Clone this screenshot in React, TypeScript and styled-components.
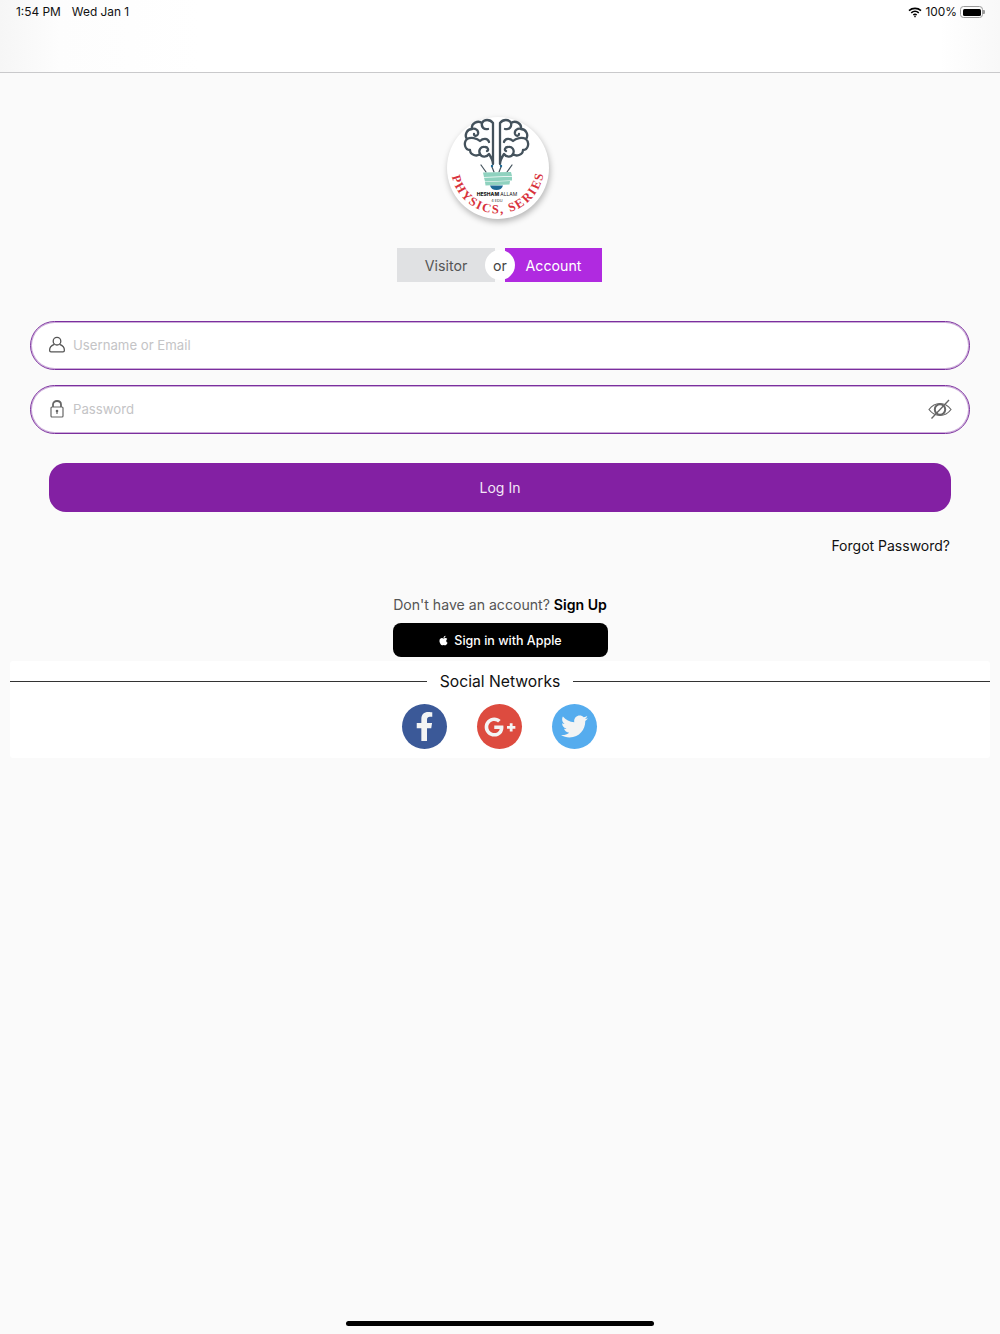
import React from 'react';
import styled, { createGlobalStyle } from 'styled-components';
import { FaApple, FaFacebookF, FaGooglePlusG, FaTwitter } from 'react-icons/fa';

const GlobalStyle = createGlobalStyle`
  html, body {
    margin: 0;
    padding: 0;
    background: #fafafa;
  }
  * {
    box-sizing: border-box;
  }
`;

const Page = styled.div`
  display: flex;
  flex-direction: column;
  height: 1334px;
  overflow: hidden;
  background: #fafafa;
  font-family: Inter, "Liberation Sans", sans-serif;
`;

const Header = styled.header`
  display: flex;
  justify-content: space-between;
  align-items: flex-start;
  flex: none;
  height: 73px;
  padding: 4px 15px 0 16px;
  background: linear-gradient(90deg, #f6f6f6 0, #fdfdfd 60px, #ffffff 200px, #ffffff 940px, #f8f8f8 1000px);
  border-bottom: 1px solid #c9c9cb;
  font-size: 11.9px;
  line-height: 16px;
  color: #111;
`;

const StatusGroup = styled.div<{ $gap: number }>`
  display: flex;
  align-items: center;
  gap: ${(p) => p.$gap}px;
`;

const Battery = styled.div`
  position: relative;
  width: 23px;
  height: 12px;
  margin-right: 2px;
  padding: 1.5px;
  border: 1px solid #9a9a9a;
  border-radius: 3.5px;

  &::before {
    content: '';
    display: block;
    height: 100%;
    background: #000;
    border-radius: 1.5px;
  }

  &::after {
    content: '';
    position: absolute;
    right: -3px;
    top: 3px;
    width: 2px;
    height: 4px;
    background: #9a9a9a;
    border-radius: 0 1px 1px 0;
  }
`;

const Content = styled.main`
  display: flex;
  flex-direction: column;
  align-items: center;
  flex: 1;
`;

const LogoWrap = styled.div`
  width: 102px;
  height: 102px;
  margin: 44px 4px 0 0;
  border-radius: 50%;
  background: #fff;
  box-shadow: 1px 3px 6px rgba(0, 0, 0, 0.28);
`;

const Toggle = styled.div`
  position: relative;
  display: flex;
  justify-content: space-between;
  width: 205px;
  height: 34px;
  margin: 29px 1px 0 0;
`;

const Segment = styled.div<{ $active?: boolean }>`
  display: flex;
  align-items: center;
  justify-content: center;
  width: ${(p) => (p.$active ? 97 : 98)}px;
  background: ${(p) => (p.$active ? '#b02ae0' : '#e0e1e3')};
  color: ${(p) => (p.$active ? '#fff' : '#555')};
  font-size: 14.2px;
`;

const OrBadge = styled.div`
  position: absolute;
  left: 88px;
  top: 2px;
  width: 30px;
  height: 30px;
  display: flex;
  align-items: center;
  justify-content: center;
  border-radius: 50%;
  background: #fff;
  color: #444;
  font-size: 14.2px;
`;

const Field = styled.div<{ $first?: boolean }>`
  display: flex;
  align-items: center;
  width: 940px;
  height: 49px;
  margin-top: ${(p) => (p.$first ? 39 : 15)}px;
  padding: 0 17px 1px;
  background: #fff;
  border: 1px solid #7b2f9e;
  border-radius: 25px;
  box-shadow: inset 0 0 0 1px rgba(128, 50, 159, 0.4);
`;

const FieldIcon = styled.span`
  display: flex;
  justify-content: center;
  width: 18px;
  margin-right: 7px;
`;

const Placeholder = styled.span`
  flex: 1;
  color: #c4c4c6;
  font-size: 13.2px;
`;

const LoginButton = styled.div`
  display: flex;
  align-items: center;
  justify-content: center;
  width: 902px;
  height: 49px;
  margin-top: 29px;
  background: #8320a3;
  border-radius: 17px;
  color: #f3e6f7;
  font-size: 14px;
`;

const ForgotRow = styled.div`
  align-self: stretch;
  margin-top: 25px;
  padding-right: 50px;
  text-align: right;
  color: #111;
  font-size: 14px;
  line-height: 18px;
`;

const SignUpRow = styled.div`
  margin-top: 41px;
  color: #555;
  font-size: 14.1px;
  line-height: 18px;

  b {
    color: #000;
    font-weight: 600;
  }
`;

const AppleButton = styled.div`
  display: flex;
  align-items: center;
  justify-content: center;
  gap: 5px;
  width: 215px;
  height: 34px;
  margin-top: 9px;
  background: #000;
  border-radius: 8px;
  color: #fff;
  font-size: 12.5px;
  font-weight: 500;
`;

const SocialCard = styled.section`
  width: 980px;
  height: 97px;
  margin-top: 4px;
  background: #fff;
  border-radius: 3px;
`;

const DividerTitle = styled.div`
  display: flex;
  align-items: center;
  gap: 13px;
  height: 40px;
  color: #111;
  font-size: 15.7px;

  &::before,
  &::after {
    content: '';
    flex: 1;
    height: 1px;
    background: #333;
  }
`;

const SocialRow = styled.div`
  display: flex;
  justify-content: center;
  gap: 30px;
  margin-top: 3px;
  padding-right: 1px;
`;

const SocialIcon = styled.div<{ $color: string }>`
  display: flex;
  align-items: center;
  justify-content: center;
  width: 45px;
  height: 45px;
  border-radius: 50%;
  background: ${(p) => p.$color};
  color: #f3f4f4;
  overflow: hidden;
`;

const HomeIndicator = styled.div`
  flex: none;
  width: 308px;
  height: 5px;
  margin: 0 auto 8px;
  background: #000;
  border-radius: 3px;
`;

function Wifi() {
  return (
    <svg width="14" height="11" viewBox="0 0 14 11" fill="none" stroke="#000" strokeWidth="1.6">
      <path d="M1 3.6C4.4 .6 9.600 .6 13 3.6" />
      <path d="M3.2 5.900C5.400 4 8.600 4 10.800 5.900" />
      <path d="M5.300 8C6.300 7.200 7.700 7.200 8.700 8" />
      <circle cx="7" cy="9.600" r="0.8" fill="#000" stroke="none" />
    </svg>
  );
}

function UserIcon() {
  return (
    <svg width="18" height="18" viewBox="0 0 18 18" fill="none" stroke="#555" strokeWidth="1.3">
      <circle cx="9" cy="5.200" r="3.800" />
      <path d="M6.400 8.400C3.600 9.400 1.600 11.400 1.600 14.200c0 1.200.5 1.600 1.400 1.600h12c.9 0 1.400-.4 1.400-1.600 0-2.800-2-4.800-4.800-5.800" />
    </svg>
  );
}

function LockIcon() {
  return (
    <svg width="14" height="18" viewBox="0 0 14 18" fill="none" stroke="#666" strokeWidth="1.2">
      <rect x="1" y="7" width="12" height="10" rx="1" />
      <path d="M3 7V4.600C3 2.400 4.800 1 7 1s4 1.400 4 3.600V7" strokeWidth="1.8" />
      <circle cx="7" cy="11" r="1.300" fill="#666" stroke="none" />
      <path d="M7 11v3" strokeWidth="1.2" />
    </svg>
  );
}

function EyeOffIcon() {
  return (
    <svg width="24" height="20" viewBox="0 0 24 20" fill="none" stroke="#666" strokeWidth="1.2">
      <path d="M1 10.500C4 6.500 8 4.500 12 4.500s8 2 11 6c-3 4-7 6-11 6s-8-2-11-6z" />
      <circle cx="12" cy="10.500" r="5.200" strokeWidth="2" />
      <path d="M3.500 19.500L21 1" strokeWidth="1.300" />
    </svg>
  );
}

function BrainHalf() {
  return (
    <g>
      <path d="M46 6C43 2 37 2 35 6C31 3 24 6 25 12C20 12 17 18 20 22C16 26 18 33 23 33C23 38 30 40 33 37C35 41 40 40 42 37C44 40 46 43 46 47V6z" />
      <path d="M35 6C34 10 37 13 41 12" />
      <path d="M25 12C28 11 32 13 31 17C30 20 27 19 27 17" />
      <path d="M20 22C24 20 30 21 33 24C36 21 41 21 42 25" />
      <path d="M33 37C31 33 34 29 38 30C41 30 42 33 40 34" />
      <path d="M34 48L39 55" strokeWidth="1.2" />
      <path d="M45 50L47 55" strokeWidth="1.2" />
    </g>
  );
}

function Logo() {
  return (
    <svg width="102" height="102" viewBox="0 0 102 102">
      <g fill="none" stroke="#44525c" strokeWidth="2.3" strokeLinecap="round" strokeLinejoin="round">
        <BrainHalf />
        <g transform="translate(99 0) scale(-1 1)">
          <BrainHalf />
        </g>
      </g>
      <circle cx="45" cy="49" r="1.200" fill="#1d6a96" />
      <circle cx="54" cy="49" r="1.200" fill="#1d6a96" />
      <g fill="#8fd2bf">
        <path d="M36 55.500l28-.5 1 4-28 1z" />
        <path d="M37 60.800l28-1 0 3.600-27 1z" />
        <path d="M38 65l25-1-.5 3.500-24 1z" />
      </g>
      <path d="M43 68.500h13c-1 3-3 4.500-6.500 4.500s-5.500-1.500-6.500-4.500z" fill="#1d6a96" />
      <text x="50" y="79" textAnchor="middle" fontSize="5" fontWeight="800" fill="#222" fontFamily="Inter, sans-serif">
        HESHAM <tspan fontWeight="400">ALLAM</tspan>
      </text>
      <text x="50" y="84.500" textAnchor="middle" fontSize="3.800" fill="#333" fontFamily="Inter, sans-serif">
        4 EDU
      </text>
      <defs>
        <path id="logo-arc" d="M5 59.500A46.500 46.500 0 0 0 96 59.500" />
      </defs>
      <text fontSize="12.500" fontFamily="'Liberation Serif', serif" fontWeight="700" fill="#d8323c" letterSpacing="1.700">
        <textPath href="#logo-arc">PHYSICS, SERIES</textPath>
      </text>
    </svg>
  );
}

export default function App() {
  return (
    <Page>
      <GlobalStyle />
      <Header>
        <StatusGroup $gap={11}>
          <span>1:54 PM</span>
          <span>Wed Jan 1</span>
        </StatusGroup>
        <StatusGroup $gap={3}>
          <Wifi />
          <span>100%</span>
          <Battery />
        </StatusGroup>
      </Header>
      <Content>
        <LogoWrap>
          <Logo />
        </LogoWrap>
        <Toggle>
          <Segment>Visitor</Segment>
          <Segment $active>Account</Segment>
          <OrBadge>or</OrBadge>
        </Toggle>
        <Field $first>
          <FieldIcon>
            <UserIcon />
          </FieldIcon>
          <Placeholder>Username or Email</Placeholder>
        </Field>
        <Field>
          <FieldIcon>
            <LockIcon />
          </FieldIcon>
          <Placeholder>Password</Placeholder>
          <EyeOffIcon />
        </Field>
        <LoginButton>Log In</LoginButton>
        <ForgotRow>Forgot Password?</ForgotRow>
        <SignUpRow>
          Don't have an account? <b>Sign Up</b>
        </SignUpRow>
        <AppleButton>
          <FaApple size={11} />
          Sign in with Apple
        </AppleButton>
        <SocialCard>
          <DividerTitle>Social Networks</DividerTitle>
          <SocialRow>
            <SocialIcon $color="#3b5998">
              <FaFacebookF size={29} />
            </SocialIcon>
            <SocialIcon $color="#dd4b3f">
              <FaGooglePlusG size={32} />
            </SocialIcon>
            <SocialIcon $color="#55acee">
              <FaTwitter size={27} />
            </SocialIcon>
          </SocialRow>
        </SocialCard>
      </Content>
      <HomeIndicator />
    </Page>
  );
}
